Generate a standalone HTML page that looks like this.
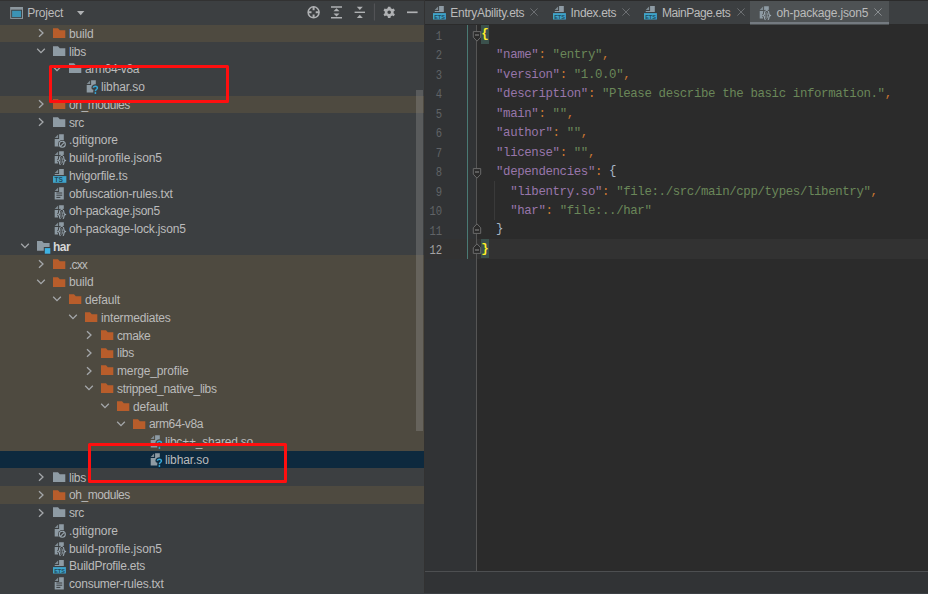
<!DOCTYPE html>
<html><head><meta charset="utf-8"><title>IDE</title>
<style>
html,body{margin:0;padding:0;background:#2b2b2b;}
body{width:928px;height:594px;overflow:hidden;position:relative;font-family:"Liberation Sans",sans-serif;font-size:12px;color:#bbbbbb;}
.abs{position:absolute;}
#tree{position:absolute;left:0;top:0;width:424px;height:594px;background:#3c3f41;overflow:hidden;}
.row{position:absolute;left:0;width:424px;height:17.755px;}
.row.x{background:#4e4a40;}
.row.s{background:#0d293e;}
.row .lb{position:absolute;top:1.2px;line-height:17.755px;white-space:pre;font-size:12px;color:#bbbbbb;}
.row .ic{position:absolute;top:1.4px;}
svg{overflow:visible;}
.row .ar{position:absolute;top:0.6px;}
.redbox{position:absolute;border:3.6px solid #ff0f0f;border-radius:1.5px;box-sizing:border-box;}
#ed{position:absolute;left:425px;top:24.6px;width:503px;height:547px;background:#2b2b2b;overflow:hidden;}
.ln{position:absolute;left:0;width:17.1px;text-align:right;font-family:"Liberation Mono",monospace;font-size:12px;color:#606366;line-height:24px;height:19.5px;transform:scaleX(0.88);transform-origin:100% 50%;}
.cl{position:absolute;left:56.9px;white-space:pre;font-family:"Liberation Mono",monospace;font-size:12.4px;letter-spacing:-0.37px;line-height:23.4px;height:19.5px;color:#a9b7c6;}
.k{color:#9876aa}.s{color:#6a8759}.p{color:#cc7832}
.tab{position:absolute;top:0;height:24px;}
.tab .tx{position:absolute;top:0;line-height:25px;white-space:pre;color:#bbbbbb;font-size:12px;}
</style></head><body>
<div id="tree"><div class="row x" style="top:24.580px"><svg class="ar" style="left:32.6px" width="16" height="16" viewBox="0 0 16 16"><path d="M6,4.2 L10,8 L6,11.8" fill="none" stroke="#a4a7aa" stroke-width="1.3"/></svg><svg class="ic" width="16" height="16" viewBox="0 0 16 16" style="left:53px"><path d="M0,2.3 H5 L6.8,4.2 H12.3 V12.1 H0 Z" fill="#b85d2b"/></svg><span class="lb" style="left:69.0px;letter-spacing:-0.172px;">build</span></div>
<div class="row " style="top:42.335px"><svg class="ar" style="left:32.6px" width="16" height="16" viewBox="0 0 16 16"><path d="M4.2,5.8 L8,9.6 L11.8,5.8" fill="none" stroke="#a4a7aa" stroke-width="1.3"/></svg><svg class="ic" width="16" height="16" viewBox="0 0 16 16" style="left:53px"><path d="M0,2.3 H5 L6.8,4.2 H12.3 V12.1 H0 Z" fill="#8e9ba4"/></svg><span class="lb" style="left:69.0px;letter-spacing:-0.279px;">libs</span></div>
<div class="row " style="top:60.090px"><svg class="ar" style="left:48.6px" width="16" height="16" viewBox="0 0 16 16"><path d="M4.2,5.8 L8,9.6 L11.8,5.8" fill="none" stroke="#a4a7aa" stroke-width="1.3"/></svg><svg class="ic" width="16" height="16" viewBox="0 0 16 16" style="left:69px"><path d="M0,2.3 H5 L6.8,4.2 H12.3 V12.1 H0 Z" fill="#8e9ba4"/></svg><span class="lb" style="left:85.0px;letter-spacing:-0.362px;">arm64-v8a</span></div>
<div class="row " style="top:77.845px"><svg class="ic" width="16" height="16" viewBox="0 0 16 16" style="left:85px"><path d="M6.1,1.2 H10.8 V13.6 H1.7 V6.1 H6.1 Z" fill="#8e9ba4"/><path d="M5.1,1.5 V5.1 H1.7 Z" fill="#7f8b93"/><path d="M8.4,8.8 C8.4,6.8 12.4,6.8 12.4,9 C12.4,10.5 10.4,10.6 10.4,12.2 V14.6" fill="none" stroke="#3c3f41" stroke-width="4" stroke-linecap="round"/><rect x="8.6" y="9" width="4" height="6" fill="#3c3f41"/><path d="M8.4,8.8 C8.4,6.8 12.4,6.8 12.4,9 C12.4,10.5 10.4,10.6 10.4,12.2" fill="none" stroke="#35a8d8" stroke-width="1.5"/><circle cx="10.4" cy="14" r="0.9" fill="#35a8d8"/></svg><span class="lb" style="left:101.0px;letter-spacing:-0.111px;">libhar.so</span></div>
<div class="row x" style="top:95.600px"><svg class="ar" style="left:32.6px" width="16" height="16" viewBox="0 0 16 16"><path d="M6,4.2 L10,8 L6,11.8" fill="none" stroke="#a4a7aa" stroke-width="1.3"/></svg><svg class="ic" width="16" height="16" viewBox="0 0 16 16" style="left:53px"><path d="M0,2.3 H5 L6.8,4.2 H12.3 V12.1 H0 Z" fill="#b85d2b"/></svg><span class="lb" style="left:69.0px;letter-spacing:-0.449px;">oh_modules</span></div>
<div class="row " style="top:113.355px"><svg class="ar" style="left:32.6px" width="16" height="16" viewBox="0 0 16 16"><path d="M6,4.2 L10,8 L6,11.8" fill="none" stroke="#a4a7aa" stroke-width="1.3"/></svg><svg class="ic" width="16" height="16" viewBox="0 0 16 16" style="left:53px"><path d="M0,2.3 H5 L6.8,4.2 H12.3 V12.1 H0 Z" fill="#8e9ba4"/></svg><span class="lb" style="left:69.0px;letter-spacing:-0.433px;">src</span></div>
<div class="row " style="top:131.110px"><svg class="ic" width="16" height="16" viewBox="0 0 16 16" style="left:53px"><path d="M6.1,1.2 H10.8 V13.6 H1.7 V6.1 H6.1 Z" fill="#8e9ba4"/><path d="M5.1,1.5 V5.1 H1.7 Z" fill="#7f8b93"/><circle cx="9.3" cy="11.3" r="4.3" fill="#3c3f41"/><circle cx="9.3" cy="11.3" r="3" fill="none" stroke="#9aa7b0" stroke-width="1.1"/><path d="M7.3,13.3 L11.3,9.3" stroke="#9aa7b0" stroke-width="1.1"/></svg><span class="lb" style="left:69.0px;letter-spacing:-0.037px;">.gitignore</span></div>
<div class="row " style="top:148.865px"><svg class="ic" width="16" height="16" viewBox="0 0 16 16" style="left:53px"><path d="M6.1,1.2 H10.8 V13.6 H1.7 V6.1 H6.1 Z" fill="#8e9ba4"/><path d="M5.1,1.5 V5.1 H1.7 Z" fill="#7f8b93"/><path d="M7.6,6.4 C6,6.4 6.8,8.6 6.3,9.6 C6,10.2 5.4,10.5 4.3,10.5 C5.4,10.5 6,10.8 6.3,11.4 C6.8,12.4 6,14.6 7.6,14.6" fill="none" stroke="#3c3f41" stroke-width="3.2"/><path d="M9.8,6.4 C11.4,6.4 10.6,8.6 11.1,9.6 C11.4,10.2 12,10.5 13.1,10.5 C12,10.5 11.4,10.8 11.1,11.4 C10.6,12.4 11.4,14.6 9.8,14.6" fill="none" stroke="#3c3f41" stroke-width="3.2"/><rect x="6.4" y="6" width="4.6" height="9" fill="#3c3f41"/><path d="M7.6,6.4 C6,6.4 6.8,8.6 6.3,9.6 C6,10.2 5.4,10.5 4.3,10.5 C5.4,10.5 6,10.8 6.3,11.4 C6.8,12.4 6,14.6 7.6,14.6" fill="none" stroke="#9aa7b0" stroke-width="1.15"/><path d="M9.8,6.4 C11.4,6.4 10.6,8.6 11.1,9.6 C11.4,10.2 12,10.5 13.1,10.5 C12,10.5 11.4,10.8 11.1,11.4 C10.6,12.4 11.4,14.6 9.8,14.6" fill="none" stroke="#9aa7b0" stroke-width="1.15"/><ellipse cx="8.7" cy="10.5" rx="0.9" ry="2.9" fill="none" stroke="#9aa7b0" stroke-width="0.8" opacity="0.85"/></svg><span class="lb" style="left:69.0px;letter-spacing:-0.056px;">build-profile.json5</span></div>
<div class="row " style="top:166.620px"><svg class="ic" width="16" height="16" viewBox="0 0 16 16" style="left:53px"><path d="M6.1,0.9 H10.8 V7.1 H1.7 V6 H6.1 Z" fill="#8e9ba4"/><path d="M5.1,1.4 V5.1 H1.7 Z" fill="#7f8b93"/><rect x="0" y="8.1" width="13.35" height="6.7" fill="#3fa4cb"/><text x="1.5" y="14" font-family="Liberation Sans" font-weight="bold" font-size="6.6" fill="#1f4a5c">TS</text></svg><span class="lb" style="left:69.0px;letter-spacing:-0.169px;">hvigorfile.ts</span></div>
<div class="row " style="top:184.375px"><svg class="ic" width="16" height="16" viewBox="0 0 16 16" style="left:53px"><path d="M6.1,1.2 H10.8 V13.6 H1.7 V6.1 H6.1 Z" fill="#8e9ba4"/><path d="M5.1,1.5 V5.1 H1.7 Z" fill="#7f8b93"/><path d="M3.4,7 H9.2 M3.4,9.2 H9.2 M3.4,11.4 H7.4" stroke="#3c3f41" stroke-width="1"/></svg><span class="lb" style="left:69.0px;letter-spacing:-0.176px;">obfuscation-rules.txt</span></div>
<div class="row " style="top:202.130px"><svg class="ic" width="16" height="16" viewBox="0 0 16 16" style="left:53px"><path d="M6.1,1.2 H10.8 V13.6 H1.7 V6.1 H6.1 Z" fill="#8e9ba4"/><path d="M5.1,1.5 V5.1 H1.7 Z" fill="#7f8b93"/><path d="M7.6,6.4 C6,6.4 6.8,8.6 6.3,9.6 C6,10.2 5.4,10.5 4.3,10.5 C5.4,10.5 6,10.8 6.3,11.4 C6.8,12.4 6,14.6 7.6,14.6" fill="none" stroke="#3c3f41" stroke-width="3.2"/><path d="M9.8,6.4 C11.4,6.4 10.6,8.6 11.1,9.6 C11.4,10.2 12,10.5 13.1,10.5 C12,10.5 11.4,10.8 11.1,11.4 C10.6,12.4 11.4,14.6 9.8,14.6" fill="none" stroke="#3c3f41" stroke-width="3.2"/><rect x="6.4" y="6" width="4.6" height="9" fill="#3c3f41"/><path d="M7.6,6.4 C6,6.4 6.8,8.6 6.3,9.6 C6,10.2 5.4,10.5 4.3,10.5 C5.4,10.5 6,10.8 6.3,11.4 C6.8,12.4 6,14.6 7.6,14.6" fill="none" stroke="#9aa7b0" stroke-width="1.15"/><path d="M9.8,6.4 C11.4,6.4 10.6,8.6 11.1,9.6 C11.4,10.2 12,10.5 13.1,10.5 C12,10.5 11.4,10.8 11.1,11.4 C10.6,12.4 11.4,14.6 9.8,14.6" fill="none" stroke="#9aa7b0" stroke-width="1.15"/><ellipse cx="8.7" cy="10.5" rx="0.9" ry="2.9" fill="none" stroke="#9aa7b0" stroke-width="0.8" opacity="0.85"/></svg><span class="lb" style="left:69.0px;letter-spacing:-0.233px;">oh-package.json5</span></div>
<div class="row " style="top:219.885px"><svg class="ic" width="16" height="16" viewBox="0 0 16 16" style="left:53px"><path d="M6.1,1.2 H10.8 V13.6 H1.7 V6.1 H6.1 Z" fill="#8e9ba4"/><path d="M5.1,1.5 V5.1 H1.7 Z" fill="#7f8b93"/><path d="M7.6,6.4 C6,6.4 6.8,8.6 6.3,9.6 C6,10.2 5.4,10.5 4.3,10.5 C5.4,10.5 6,10.8 6.3,11.4 C6.8,12.4 6,14.6 7.6,14.6" fill="none" stroke="#3c3f41" stroke-width="3.2"/><path d="M9.8,6.4 C11.4,6.4 10.6,8.6 11.1,9.6 C11.4,10.2 12,10.5 13.1,10.5 C12,10.5 11.4,10.8 11.1,11.4 C10.6,12.4 11.4,14.6 9.8,14.6" fill="none" stroke="#3c3f41" stroke-width="3.2"/><rect x="6.4" y="6" width="4.6" height="9" fill="#3c3f41"/><path d="M7.6,6.4 C6,6.4 6.8,8.6 6.3,9.6 C6,10.2 5.4,10.5 4.3,10.5 C5.4,10.5 6,10.8 6.3,11.4 C6.8,12.4 6,14.6 7.6,14.6" fill="none" stroke="#9aa7b0" stroke-width="1.15"/><path d="M9.8,6.4 C11.4,6.4 10.6,8.6 11.1,9.6 C11.4,10.2 12,10.5 13.1,10.5 C12,10.5 11.4,10.8 11.1,11.4 C10.6,12.4 11.4,14.6 9.8,14.6" fill="none" stroke="#9aa7b0" stroke-width="1.15"/><ellipse cx="8.7" cy="10.5" rx="0.9" ry="2.9" fill="none" stroke="#9aa7b0" stroke-width="0.8" opacity="0.85"/></svg><span class="lb" style="left:69.0px;letter-spacing:-0.161px;">oh-package-lock.json5</span></div>
<div class="row " style="top:237.640px"><svg class="ar" style="left:16.6px" width="16" height="16" viewBox="0 0 16 16"><path d="M4.2,5.8 L8,9.6 L11.8,5.8" fill="none" stroke="#a4a7aa" stroke-width="1.3"/></svg><svg class="ic" width="16" height="16" viewBox="0 0 16 16" style="left:37px"><path d="M0,2.1 H5 L6.8,4 H12.6 V8.1 H6.8 V11.7 H0 Z" fill="#8e9ba4"/><rect x="7.8" y="9.1" width="5.5" height="5.6" fill="#3fb3e3"/></svg><span class="lb" style="left:53.0px;letter-spacing:-0.562px;font-weight:bold;color:#d6d6d6;">har</span></div>
<div class="row x" style="top:255.395px"><svg class="ar" style="left:32.6px" width="16" height="16" viewBox="0 0 16 16"><path d="M6,4.2 L10,8 L6,11.8" fill="none" stroke="#a4a7aa" stroke-width="1.3"/></svg><svg class="ic" width="16" height="16" viewBox="0 0 16 16" style="left:53px"><path d="M0,2.3 H5 L6.8,4.2 H12.3 V12.1 H0 Z" fill="#b85d2b"/></svg><span class="lb" style="left:69.0px;letter-spacing:-0.836px;">.cxx</span></div>
<div class="row x" style="top:273.150px"><svg class="ar" style="left:32.6px" width="16" height="16" viewBox="0 0 16 16"><path d="M4.2,5.8 L8,9.6 L11.8,5.8" fill="none" stroke="#a4a7aa" stroke-width="1.3"/></svg><svg class="ic" width="16" height="16" viewBox="0 0 16 16" style="left:53px"><path d="M0,2.3 H5 L6.8,4.2 H12.3 V12.1 H0 Z" fill="#b85d2b"/></svg><span class="lb" style="left:69.0px;letter-spacing:-0.172px;">build</span></div>
<div class="row x" style="top:290.905px"><svg class="ar" style="left:48.6px" width="16" height="16" viewBox="0 0 16 16"><path d="M4.2,5.8 L8,9.6 L11.8,5.8" fill="none" stroke="#a4a7aa" stroke-width="1.3"/></svg><svg class="ic" width="16" height="16" viewBox="0 0 16 16" style="left:69px"><path d="M0,2.3 H5 L6.8,4.2 H12.3 V12.1 H0 Z" fill="#b85d2b"/></svg><span class="lb" style="left:85.0px;letter-spacing:-0.147px;">default</span></div>
<div class="row x" style="top:308.660px"><svg class="ar" style="left:64.6px" width="16" height="16" viewBox="0 0 16 16"><path d="M4.2,5.8 L8,9.6 L11.8,5.8" fill="none" stroke="#a4a7aa" stroke-width="1.3"/></svg><svg class="ic" width="16" height="16" viewBox="0 0 16 16" style="left:85px"><path d="M0,2.3 H5 L6.8,4.2 H12.3 V12.1 H0 Z" fill="#b85d2b"/></svg><span class="lb" style="left:101.0px;letter-spacing:-0.181px;">intermediates</span></div>
<div class="row x" style="top:326.415px"><svg class="ar" style="left:80.6px" width="16" height="16" viewBox="0 0 16 16"><path d="M6,4.2 L10,8 L6,11.8" fill="none" stroke="#a4a7aa" stroke-width="1.3"/></svg><svg class="ic" width="16" height="16" viewBox="0 0 16 16" style="left:101px"><path d="M0,2.3 H5 L6.8,4.2 H12.3 V12.1 H0 Z" fill="#b85d2b"/></svg><span class="lb" style="left:117.0px;letter-spacing:-0.429px;">cmake</span></div>
<div class="row x" style="top:344.170px"><svg class="ar" style="left:80.6px" width="16" height="16" viewBox="0 0 16 16"><path d="M6,4.2 L10,8 L6,11.8" fill="none" stroke="#a4a7aa" stroke-width="1.3"/></svg><svg class="ic" width="16" height="16" viewBox="0 0 16 16" style="left:101px"><path d="M0,2.3 H5 L6.8,4.2 H12.3 V12.1 H0 Z" fill="#b85d2b"/></svg><span class="lb" style="left:117.0px;letter-spacing:-0.279px;">libs</span></div>
<div class="row x" style="top:361.925px"><svg class="ar" style="left:80.6px" width="16" height="16" viewBox="0 0 16 16"><path d="M6,4.2 L10,8 L6,11.8" fill="none" stroke="#a4a7aa" stroke-width="1.3"/></svg><svg class="ic" width="16" height="16" viewBox="0 0 16 16" style="left:101px"><path d="M0,2.3 H5 L6.8,4.2 H12.3 V12.1 H0 Z" fill="#b85d2b"/></svg><span class="lb" style="left:117.0px;letter-spacing:-0.144px;">merge_profile</span></div>
<div class="row x" style="top:379.680px"><svg class="ar" style="left:80.6px" width="16" height="16" viewBox="0 0 16 16"><path d="M4.2,5.8 L8,9.6 L11.8,5.8" fill="none" stroke="#a4a7aa" stroke-width="1.3"/></svg><svg class="ic" width="16" height="16" viewBox="0 0 16 16" style="left:101px"><path d="M0,2.3 H5 L6.8,4.2 H12.3 V12.1 H0 Z" fill="#b85d2b"/></svg><span class="lb" style="left:117.0px;letter-spacing:-0.324px;">stripped_native_libs</span></div>
<div class="row x" style="top:397.435px"><svg class="ar" style="left:96.6px" width="16" height="16" viewBox="0 0 16 16"><path d="M4.2,5.8 L8,9.6 L11.8,5.8" fill="none" stroke="#a4a7aa" stroke-width="1.3"/></svg><svg class="ic" width="16" height="16" viewBox="0 0 16 16" style="left:117px"><path d="M0,2.3 H5 L6.8,4.2 H12.3 V12.1 H0 Z" fill="#b85d2b"/></svg><span class="lb" style="left:133.0px;letter-spacing:-0.147px;">default</span></div>
<div class="row x" style="top:415.190px"><svg class="ar" style="left:112.6px" width="16" height="16" viewBox="0 0 16 16"><path d="M4.2,5.8 L8,9.6 L11.8,5.8" fill="none" stroke="#a4a7aa" stroke-width="1.3"/></svg><svg class="ic" width="16" height="16" viewBox="0 0 16 16" style="left:133px"><path d="M0,2.3 H5 L6.8,4.2 H12.3 V12.1 H0 Z" fill="#b85d2b"/></svg><span class="lb" style="left:149.0px;letter-spacing:-0.362px;">arm64-v8a</span></div>
<div class="row x" style="top:432.945px"><svg class="ic" width="16" height="16" viewBox="0 0 16 16" style="left:149px"><path d="M6.1,1.2 H10.8 V13.6 H1.7 V6.1 H6.1 Z" fill="#8e9ba4"/><path d="M5.1,1.5 V5.1 H1.7 Z" fill="#7f8b93"/><path d="M8.4,8.8 C8.4,6.8 12.4,6.8 12.4,9 C12.4,10.5 10.4,10.6 10.4,12.2 V14.6" fill="none" stroke="#4e4a40" stroke-width="4" stroke-linecap="round"/><rect x="8.6" y="9" width="4" height="6" fill="#4e4a40"/><path d="M8.4,8.8 C8.4,6.8 12.4,6.8 12.4,9 C12.4,10.5 10.4,10.6 10.4,12.2" fill="none" stroke="#35a8d8" stroke-width="1.5"/><circle cx="10.4" cy="14" r="0.9" fill="#35a8d8"/></svg><span class="lb" style="left:165.0px;letter-spacing:-0.213px;">libc++_shared.so</span></div>
<div class="row s" style="top:450.700px"><svg class="ic" width="16" height="16" viewBox="0 0 16 16" style="left:149px"><path d="M6.1,1.2 H10.8 V13.6 H1.7 V6.1 H6.1 Z" fill="#8e9ba4"/><path d="M5.1,1.5 V5.1 H1.7 Z" fill="#7f8b93"/><path d="M8.4,8.8 C8.4,6.8 12.4,6.8 12.4,9 C12.4,10.5 10.4,10.6 10.4,12.2 V14.6" fill="none" stroke="#0d293e" stroke-width="4" stroke-linecap="round"/><rect x="8.6" y="9" width="4" height="6" fill="#0d293e"/><path d="M8.4,8.8 C8.4,6.8 12.4,6.8 12.4,9 C12.4,10.5 10.4,10.6 10.4,12.2" fill="none" stroke="#35a8d8" stroke-width="1.5"/><circle cx="10.4" cy="14" r="0.9" fill="#35a8d8"/></svg><span class="lb" style="left:165.0px;letter-spacing:-0.111px;">libhar.so</span></div>
<div class="row " style="top:468.455px"><svg class="ar" style="left:32.6px" width="16" height="16" viewBox="0 0 16 16"><path d="M6,4.2 L10,8 L6,11.8" fill="none" stroke="#a4a7aa" stroke-width="1.3"/></svg><svg class="ic" width="16" height="16" viewBox="0 0 16 16" style="left:53px"><path d="M0,2.3 H5 L6.8,4.2 H12.3 V12.1 H0 Z" fill="#8e9ba4"/></svg><span class="lb" style="left:69.0px;letter-spacing:-0.279px;">libs</span></div>
<div class="row x" style="top:486.210px"><svg class="ar" style="left:32.6px" width="16" height="16" viewBox="0 0 16 16"><path d="M6,4.2 L10,8 L6,11.8" fill="none" stroke="#a4a7aa" stroke-width="1.3"/></svg><svg class="ic" width="16" height="16" viewBox="0 0 16 16" style="left:53px"><path d="M0,2.3 H5 L6.8,4.2 H12.3 V12.1 H0 Z" fill="#b85d2b"/></svg><span class="lb" style="left:69.0px;letter-spacing:-0.449px;">oh_modules</span></div>
<div class="row " style="top:503.965px"><svg class="ar" style="left:32.6px" width="16" height="16" viewBox="0 0 16 16"><path d="M6,4.2 L10,8 L6,11.8" fill="none" stroke="#a4a7aa" stroke-width="1.3"/></svg><svg class="ic" width="16" height="16" viewBox="0 0 16 16" style="left:53px"><path d="M0,2.3 H5 L6.8,4.2 H12.3 V12.1 H0 Z" fill="#8e9ba4"/></svg><span class="lb" style="left:69.0px;letter-spacing:-0.433px;">src</span></div>
<div class="row " style="top:521.720px"><svg class="ic" width="16" height="16" viewBox="0 0 16 16" style="left:53px"><path d="M6.1,1.2 H10.8 V13.6 H1.7 V6.1 H6.1 Z" fill="#8e9ba4"/><path d="M5.1,1.5 V5.1 H1.7 Z" fill="#7f8b93"/><circle cx="9.3" cy="11.3" r="4.3" fill="#3c3f41"/><circle cx="9.3" cy="11.3" r="3" fill="none" stroke="#9aa7b0" stroke-width="1.1"/><path d="M7.3,13.3 L11.3,9.3" stroke="#9aa7b0" stroke-width="1.1"/></svg><span class="lb" style="left:69.0px;letter-spacing:-0.037px;">.gitignore</span></div>
<div class="row " style="top:539.475px"><svg class="ic" width="16" height="16" viewBox="0 0 16 16" style="left:53px"><path d="M6.1,1.2 H10.8 V13.6 H1.7 V6.1 H6.1 Z" fill="#8e9ba4"/><path d="M5.1,1.5 V5.1 H1.7 Z" fill="#7f8b93"/><path d="M7.6,6.4 C6,6.4 6.8,8.6 6.3,9.6 C6,10.2 5.4,10.5 4.3,10.5 C5.4,10.5 6,10.8 6.3,11.4 C6.8,12.4 6,14.6 7.6,14.6" fill="none" stroke="#3c3f41" stroke-width="3.2"/><path d="M9.8,6.4 C11.4,6.4 10.6,8.6 11.1,9.6 C11.4,10.2 12,10.5 13.1,10.5 C12,10.5 11.4,10.8 11.1,11.4 C10.6,12.4 11.4,14.6 9.8,14.6" fill="none" stroke="#3c3f41" stroke-width="3.2"/><rect x="6.4" y="6" width="4.6" height="9" fill="#3c3f41"/><path d="M7.6,6.4 C6,6.4 6.8,8.6 6.3,9.6 C6,10.2 5.4,10.5 4.3,10.5 C5.4,10.5 6,10.8 6.3,11.4 C6.8,12.4 6,14.6 7.6,14.6" fill="none" stroke="#9aa7b0" stroke-width="1.15"/><path d="M9.8,6.4 C11.4,6.4 10.6,8.6 11.1,9.6 C11.4,10.2 12,10.5 13.1,10.5 C12,10.5 11.4,10.8 11.1,11.4 C10.6,12.4 11.4,14.6 9.8,14.6" fill="none" stroke="#9aa7b0" stroke-width="1.15"/><ellipse cx="8.7" cy="10.5" rx="0.9" ry="2.9" fill="none" stroke="#9aa7b0" stroke-width="0.8" opacity="0.85"/></svg><span class="lb" style="left:69.0px;letter-spacing:-0.056px;">build-profile.json5</span></div>
<div class="row " style="top:557.230px"><svg class="ic" width="16" height="16" viewBox="0 0 16 16" style="left:53px"><path d="M6.1,0.9 H10.8 V7.1 H1.7 V6 H6.1 Z" fill="#8e9ba4"/><path d="M5.1,1.4 V5.1 H1.7 Z" fill="#7f8b93"/><rect x="0" y="8.1" width="12.9" height="6.4" fill="#3fa4cb"/><text x="1.2" y="13.5" font-family="Liberation Sans" font-weight="bold" font-size="5.6" fill="#1f4a5c" letter-spacing="-0.1">ETS</text></svg><span class="lb" style="left:69.0px;letter-spacing:-0.253px;">BuildProfile.ets</span></div>
<div class="row " style="top:574.985px"><svg class="ic" width="16" height="16" viewBox="0 0 16 16" style="left:53px"><path d="M6.1,1.2 H10.8 V13.6 H1.7 V6.1 H6.1 Z" fill="#8e9ba4"/><path d="M5.1,1.5 V5.1 H1.7 Z" fill="#7f8b93"/><path d="M3.4,7 H9.2 M3.4,9.2 H9.2 M3.4,11.4 H7.4" stroke="#3c3f41" stroke-width="1"/></svg><span class="lb" style="left:69.0px;letter-spacing:-0.234px;">consumer-rules.txt</span></div>
<div class="row " style="top:592.740px"><svg class="ic" width="16" height="16" viewBox="0 0 16 16" style="left:53px"><path d="M6.1,1.2 H10.8 V13.6 H1.7 V6.1 H6.1 Z" fill="#8e9ba4"/><path d="M5.1,1.5 V5.1 H1.7 Z" fill="#7f8b93"/><path d="M3.4,7 H9.2 M3.4,9.2 H9.2 M3.4,11.4 H7.4" stroke="#3c3f41" stroke-width="1"/></svg></div>
<div class="abs" style="left:0;top:0;width:424px;height:24.6px;background:#3c3f41"></div><div class="abs" style="left:0;top:0;width:928px;height:1px;background:#323232"></div><svg class="abs" style="left:9px;top:5px" width="16" height="16" viewBox="0 0 16 16"><rect x="1.7" y="2.5" width="11.8" height="10.9" fill="none" stroke="#8c979e" stroke-width="1"/><rect x="1.7" y="2.5" width="11.8" height="2.2" fill="#8c979e"/><rect x="3.1" y="5.7" width="9" height="6.4" fill="#3b93b5"/></svg><span class="abs" style="left:27.2px;top:0;line-height:27.5px;letter-spacing:-0.194px;color:#bbbbbb">Project</span><svg class="abs" style="left:76px;top:9px" width="10" height="8" viewBox="0 0 10 8"><path d="M1,2 H8.4 L4.7,6.2 Z" fill="#afb1b3"/></svg><svg class="abs" style="left:304px;top:2px" width="120" height="22" viewBox="0 0 120 22">
<g fill="none" stroke="#afb1b3" stroke-width="1.3">
<circle cx="9.6" cy="10.3" r="5.5" stroke-width="1.5"/>
<path d="M9.6,4.8 V8.2 M9.6,12.4 V15.8 M4.1,10.3 H7.5 M11.7,10.3 H15.1" stroke-width="2"/>
<path d="M27,4.9 H38 M27,15.8 H38" stroke-width="1.5"/>
<path d="M50.6,10.3 H61" stroke-width="1.4"/>
<path d="M103,10.3 H113.6" stroke-width="1.7"/>
</g>
<g fill="#afb1b3">
<path d="M29.5,9.2 L32.5,6.2 L35.5,9.2 Z"/><path d="M29.5,11.5 L32.5,14.5 L35.5,11.5 Z"/>
<path d="M52.8,4.8 H58.8 L55.8,7.9 Z"/><path d="M52.8,15.9 H58.8 L55.8,12.8 Z"/>
</g>
<path d="M70.4,1.5 V18.5" stroke="#555759" stroke-width="1"/>
<g transform="translate(85.2,10.3)">
<path d="M-1.2,-5.6 H1.2 L1.6,-4 L3.1,-3.2 L4.6,-3.9 L5.7,-1.9 L4.4,-0.9 V0.9 L5.7,1.9 L4.6,3.9 L3.1,3.2 L1.6,4 L1.2,5.6 H-1.2 L-1.6,4 L-3.1,3.2 L-4.6,3.9 L-5.7,1.9 L-4.4,0.9 V-0.9 L-5.7,-1.9 L-4.6,-3.9 L-3.1,-3.2 L-1.6,-4 Z M0,-1.8 A1.8,1.8 0 1 0 0,1.8 A1.8,1.8 0 1 0 0,-1.8 Z" fill="#afb1b3" fill-rule="evenodd"/>
</g>
</svg><div class="abs" style="left:416px;top:90.3px;width:7px;height:340.5px;background:rgba(166,166,166,0.28)"></div><div class="redbox" style="left:48.6px;top:64.8px;width:180.3px;height:38.5px"></div><div class="redbox" style="left:87.7px;top:443.1px;width:199.7px;height:40.1px;border-width:3.8px"></div></div>
<div class="abs" style="left:424px;top:0;width:1px;height:594px;background:#323232"></div><div class="abs" style="left:425px;top:1px;width:503px;height:23px;background:#3c3f41"></div><div class="abs" style="left:749.9px;top:1px;width:138.7px;height:23.5px;background:#4e5254"></div><div class="abs" style="left:749.9px;top:22.3px;width:138.7px;height:2.2px;background:#747a80"></div><svg class="abs" width="16" height="16" viewBox="0 0 16 16" style="left:432.6px;top:5.1px"><path d="M6.1,0.9 H10.8 V7.1 H1.7 V6 H6.1 Z" fill="#8e9ba4"/><path d="M5.1,1.4 V5.1 H1.7 Z" fill="#7f8b93"/><rect x="0" y="8.1" width="12.9" height="6.4" fill="#3fa4cb"/><text x="1.2" y="13.5" font-family="Liberation Sans" font-weight="bold" font-size="5.6" fill="#1f4a5c" letter-spacing="-0.1">ETS</text></svg><span class="abs" style="left:450.3px;top:0;line-height:27.3px;white-space:pre;letter-spacing:-0.279px;color:#bbbbbb">EntryAbility.ets</span><svg class="abs" style="left:530.2px;top:8.4px" width="8" height="8" viewBox="0 0 8 8"><path d="M0.4,0.4 L7.6,7.6 M7.6,0.4 L0.4,7.6" stroke="#6c6f72" stroke-width="1"/></svg><svg class="abs" width="16" height="16" viewBox="0 0 16 16" style="left:552.6px;top:5.1px"><path d="M6.1,0.9 H10.8 V7.1 H1.7 V6 H6.1 Z" fill="#8e9ba4"/><path d="M5.1,1.4 V5.1 H1.7 Z" fill="#7f8b93"/><rect x="0" y="8.1" width="12.9" height="6.4" fill="#3fa4cb"/><text x="1.2" y="13.5" font-family="Liberation Sans" font-weight="bold" font-size="5.6" fill="#1f4a5c" letter-spacing="-0.1">ETS</text></svg><span class="abs" style="left:570.6px;top:0;line-height:27.3px;white-space:pre;letter-spacing:-0.345px;color:#bbbbbb">Index.ets</span><svg class="abs" style="left:621.8px;top:8.4px" width="8" height="8" viewBox="0 0 8 8"><path d="M0.4,0.4 L7.6,7.6 M7.6,0.4 L0.4,7.6" stroke="#6c6f72" stroke-width="1"/></svg><svg class="abs" width="16" height="16" viewBox="0 0 16 16" style="left:643.7px;top:5.1px"><path d="M6.1,0.9 H10.8 V7.1 H1.7 V6 H6.1 Z" fill="#8e9ba4"/><path d="M5.1,1.4 V5.1 H1.7 Z" fill="#7f8b93"/><rect x="0" y="8.1" width="12.9" height="6.4" fill="#3fa4cb"/><text x="1.2" y="13.5" font-family="Liberation Sans" font-weight="bold" font-size="5.6" fill="#1f4a5c" letter-spacing="-0.1">ETS</text></svg><span class="abs" style="left:661.9px;top:0;line-height:27.3px;white-space:pre;letter-spacing:-0.416px;color:#bbbbbb">MainPage.ets</span><svg class="abs" style="left:736.5px;top:8.4px" width="8" height="8" viewBox="0 0 8 8"><path d="M0.4,0.4 L7.6,7.6 M7.6,0.4 L0.4,7.6" stroke="#6c6f72" stroke-width="1"/></svg><svg class="abs" width="16" height="16" viewBox="0 0 16 16" style="left:758.3px;top:4.9px"><path d="M6.1,1.2 H10.8 V13.6 H1.7 V6.1 H6.1 Z" fill="#8e9ba4"/><path d="M5.1,1.5 V5.1 H1.7 Z" fill="#7f8b93"/><path d="M7.6,6.4 C6,6.4 6.8,8.6 6.3,9.6 C6,10.2 5.4,10.5 4.3,10.5 C5.4,10.5 6,10.8 6.3,11.4 C6.8,12.4 6,14.6 7.6,14.6" fill="none" stroke="#4e5254" stroke-width="3.2"/><path d="M9.8,6.4 C11.4,6.4 10.6,8.6 11.1,9.6 C11.4,10.2 12,10.5 13.1,10.5 C12,10.5 11.4,10.8 11.1,11.4 C10.6,12.4 11.4,14.6 9.8,14.6" fill="none" stroke="#4e5254" stroke-width="3.2"/><rect x="6.4" y="6" width="4.6" height="9" fill="#4e5254"/><path d="M7.6,6.4 C6,6.4 6.8,8.6 6.3,9.6 C6,10.2 5.4,10.5 4.3,10.5 C5.4,10.5 6,10.8 6.3,11.4 C6.8,12.4 6,14.6 7.6,14.6" fill="none" stroke="#9aa7b0" stroke-width="1.15"/><path d="M9.8,6.4 C11.4,6.4 10.6,8.6 11.1,9.6 C11.4,10.2 12,10.5 13.1,10.5 C12,10.5 11.4,10.8 11.1,11.4 C10.6,12.4 11.4,14.6 9.8,14.6" fill="none" stroke="#9aa7b0" stroke-width="1.15"/><ellipse cx="8.7" cy="10.5" rx="0.9" ry="2.9" fill="none" stroke="#9aa7b0" stroke-width="0.8" opacity="0.85"/></svg><span class="abs" style="left:776.5px;top:0;line-height:27.3px;white-space:pre;letter-spacing:-0.190px;color:#bbbbbb">oh-package.json5</span><svg class="abs" style="left:873.8px;top:8.4px" width="8" height="8" viewBox="0 0 8 8"><path d="M0.4,0.4 L7.6,7.6 M7.6,0.4 L0.4,7.6" stroke="#8a8e91" stroke-width="1"/></svg><div id="ed"><div class="abs" style="left:0;top:0;width:51px;height:547px;background:#313335"></div><div class="abs" style="left:0;top:214.9px;width:503px;height:19.5px;background:#323232"></div><div class="abs" style="left:0;top:214.9px;width:51px;height:19.5px;background:#323232"></div><div class="abs" style="left:42.2px;top:0;width:1.3px;height:234.4px;background:#4a7a74"></div><div class="abs" style="left:51px;top:0;width:1px;height:547px;background:#555555"></div><div class="ln" style="top:0.40px;color:#606366">1</div><div class="cl" style="top:0.40px"><span class="br0"><i>{</i></span></div>
<div class="ln" style="top:19.90px;color:#606366">2</div><div class="cl" style="top:19.90px">  <span class="k">"name"</span><span class="p">:</span> <span class="s">"entry"</span><span class="p">,</span></div>
<div class="ln" style="top:39.40px;color:#606366">3</div><div class="cl" style="top:39.40px">  <span class="k">"version"</span><span class="p">:</span> <span class="s">"1.0.0"</span><span class="p">,</span></div>
<div class="ln" style="top:58.90px;color:#606366">4</div><div class="cl" style="top:58.90px">  <span class="k">"description"</span><span class="p">:</span> <span class="s">"Please describe the basic information."</span><span class="p">,</span></div>
<div class="ln" style="top:78.40px;color:#606366">5</div><div class="cl" style="top:78.40px">  <span class="k">"main"</span><span class="p">:</span> <span class="s">""</span><span class="p">,</span></div>
<div class="ln" style="top:97.90px;color:#606366">6</div><div class="cl" style="top:97.90px">  <span class="k">"author"</span><span class="p">:</span> <span class="s">""</span><span class="p">,</span></div>
<div class="ln" style="top:117.40px;color:#606366">7</div><div class="cl" style="top:117.40px">  <span class="k">"license"</span><span class="p">:</span> <span class="s">""</span><span class="p">,</span></div>
<div class="ln" style="top:136.90px;color:#606366">8</div><div class="cl" style="top:136.90px">  <span class="k">"dependencies"</span><span class="p">:</span> <span class="b"><i>{</i></span></div>
<div class="ln" style="top:156.40px;color:#606366">9</div><div class="cl" style="top:156.40px">    <span class="k">"libentry.so"</span><span class="p">:</span> <span class="s">"file:./src/main/cpp/types/libentry"</span><span class="p">,</span></div>
<div class="ln" style="top:175.90px;color:#606366">10</div><div class="cl" style="top:175.90px">    <span class="k">"har"</span><span class="p">:</span> <span class="s">"file:../har"</span></div>
<div class="ln" style="top:195.40px;color:#606366">11</div><div class="cl" style="top:195.40px">  <span class="b"><i>}</i></span></div>
<div class="ln" style="top:214.90px;color:#a4a3a3">12</div><div class="cl" style="top:214.90px"><span class="br0"><i>}</i></span></div>
<div class="abs" style="left:69.2px;top:156.4px;width:1px;height:38.6px;background:#3a3a3a"></div><svg class="abs" style="left:46.5px;top:6.6px" width="10" height="11" viewBox="0 0 10 11"><path d="M1.3,0.6 H8.7 V6.2 L5,10.2 L1.3,6.2 Z" fill="#2b2b2b" stroke="#6a6a6a" stroke-width="1"/><path d="M3,4 H7" stroke="#858585" stroke-width="1.1"/></svg><svg class="abs" style="left:46.5px;top:143.4px" width="10" height="11" viewBox="0 0 10 11"><path d="M1.3,0.6 H8.7 V6.2 L5,10.2 L1.3,6.2 Z" fill="#2b2b2b" stroke="#6a6a6a" stroke-width="1"/><path d="M3,4 H7" stroke="#858585" stroke-width="1.1"/></svg><svg class="abs" style="left:46.5px;top:198.5px" width="10" height="11" viewBox="0 0 10 11"><path d="M1.3,10.4 H8.7 V4.8 L5,0.8 L1.3,4.8 Z" fill="#2b2b2b" stroke="#6a6a6a" stroke-width="1"/><path d="M3,7 H7" stroke="#858585" stroke-width="1.1"/></svg><svg class="abs" style="left:46.5px;top:218.0px" width="10" height="11" viewBox="0 0 10 11"><path d="M1.3,10.4 H8.7 V4.8 L5,0.8 L1.3,4.8 Z" fill="#2b2b2b" stroke="#6a6a6a" stroke-width="1"/><path d="M3,7 H7" stroke="#858585" stroke-width="1.1"/></svg></div>
<div class="abs" style="left:425px;top:571px;width:503px;height:1px;background:#4d4f51"></div><div class="abs" style="left:425px;top:572px;width:503px;height:22px;background:#313335"></div><div class="abs" style="left:0;top:592.5px;width:928px;height:1.5px;background:#3b3f43"></div><style>.br0{color:#ffef28;font-weight:bold;background:#3b514d;display:inline-block;height:19px;width:7.5px;vertical-align:top;margin-left:-0.7px;}.br0 i,.b i{font-style:normal;position:relative;top:-1.6px;}</style></body></html>
